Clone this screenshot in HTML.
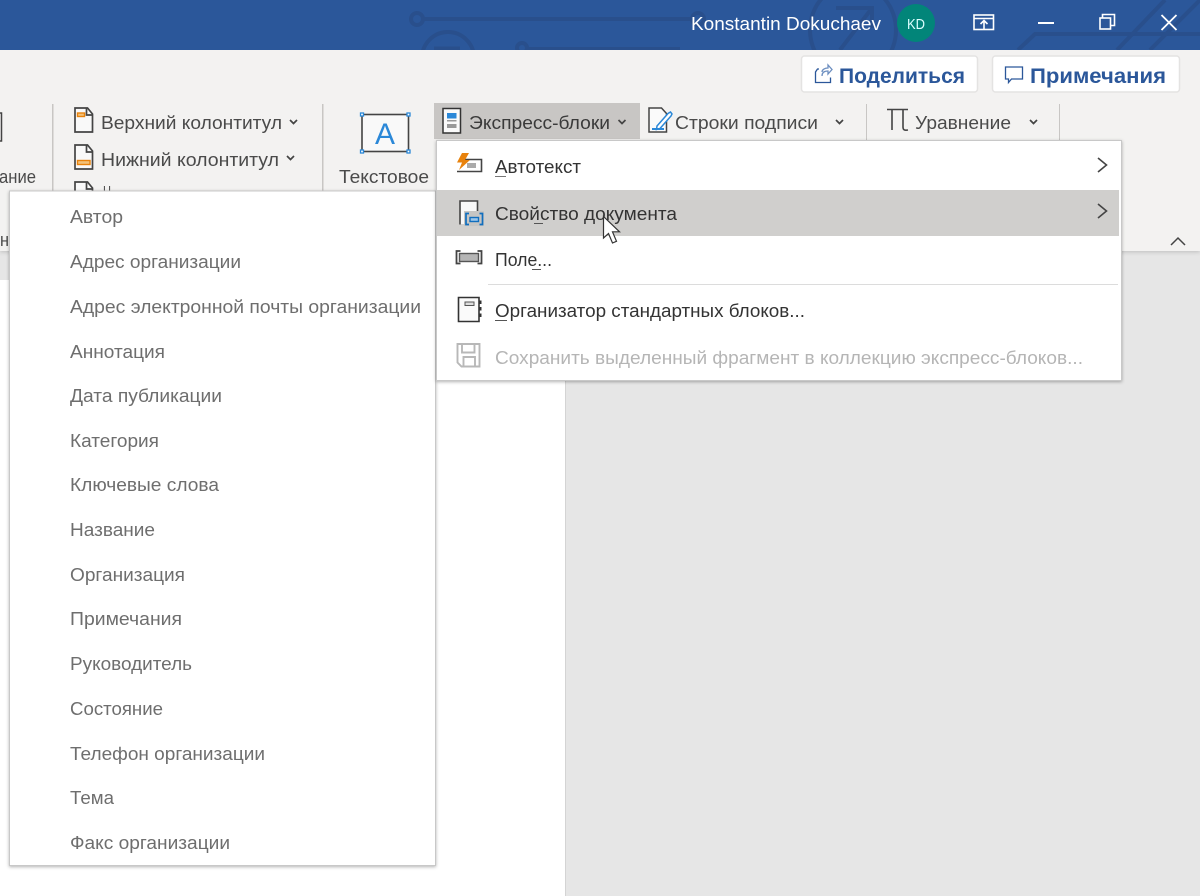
<!DOCTYPE html>
<html><head><meta charset="utf-8">
<style>
html,body{margin:0;padding:0;background:#fff;width:1200px;height:896px;overflow:hidden}
svg{display:block}
text{font-family:"Liberation Sans","DejaVu Sans",sans-serif;font-size:18px;fill:#4a4a4a}
.m text{fill:#6e6e6e}
</style></head><body>
<svg width="1200" height="896" viewBox="0 0 1200 896" xmlns="http://www.w3.org/2000/svg">
<defs>
<filter id="s" x="-5%" y="-5%" width="110%" height="110%"><feDropShadow dx="0" dy="1" stdDeviation="1.5" flood-color="#000" flood-opacity=".3"/></filter>
<filter id="s2" x="-5%" y="-50%" width="110%" height="200%"><feDropShadow dx="0" dy="1" stdDeviation="2" flood-color="#000" flood-opacity=".18"/></filter>
<clipPath id="tb"><rect width="1200" height="50"/></clipPath>
</defs>
<!-- backgrounds -->
<rect width="1200" height="896" fill="#e6e6e6"/>
<rect x="0" y="280" width="565" height="616" fill="#fff"/>
<rect x="565" y="280" width="1" height="616" fill="#d4d4d4"/>
<rect x="0" y="50" width="1200" height="201" fill="#f3f2f1" filter="url(#s2)"/>
<!-- title bar -->
<rect width="1200" height="50" fill="#2b579a"/>
<g clip-path="url(#tb)" fill="none" stroke="#294f8c" stroke-width="4">
<circle cx="417" cy="19" r="6"/><path d="M423 19H692"/><circle cx="698" cy="19" r="6"/>
<circle cx="448" cy="58" r="26"/><path d="M434 50h26" stroke-width="7"/>
<circle cx="522" cy="48" r="5"/><path d="M527 49H680"/>
<ellipse cx="853" cy="30" rx="43" ry="46"/>
<path d="M836 8h36v20M872 8L840 50"/>
<path d="M1018 50l17-16H1200"/><path d="M1117 50L1165 0M1150 50L1200 0"/>
</g>
<text x="691" y="30" textLength="190" lengthAdjust="spacingAndGlyphs" style="fill:#fff">Konstantin Dokuchaev</text>
<ellipse cx="916" cy="23" rx="19" ry="19" fill="#028579"/>
<text x="907" y="29" textLength="18" lengthAdjust="spacingAndGlyphs" style="fill:#dff;font-size:15px">KD</text>
<g fill="none" stroke="#fff" stroke-width="1.6">
<rect x="974" y="15" width="19.500" height="14.500"/><path d="M974 18.500h19.500"/>
<path d="M984 29.500v-8M980.500 24l3.500-3.500 3.500 3.500"/>
<path d="M1038 23h16" stroke-width="2"/>
<rect x="1100" y="18" width="10.500" height="11"/><path d="M1102.500 18v-3.500h12v11h-4"/>
<path d="M1161.500 15l15 15M1176.500 15l-15 15" stroke-width="1.800"/>
</g>
<!-- share / comments -->
<rect x="801.500" y="56" width="176" height="36" rx="3" fill="#fff" stroke="#e4e3e2" stroke-width="1.500"/>
<rect x="992.500" y="56" width="187" height="36" rx="3" fill="#fff" stroke="#e4e3e2" stroke-width="1.500"/>
<g fill="none" stroke="#2b579a" stroke-width="1.300">
<path d="M819 69l-1.500 0-2 3v10.500h15v-5"/><path d="M822 76c0-4 3-5 6-5v3l4-4.500-4-4.500v3c-3 0-6 1.500-6 4" stroke="#6d8fc0"/>
<path d="M1005.500 67h17v12h-11l-3 3.500v-3.500h-3z"/>
</g>
<text x="839" y="83" textLength="126" lengthAdjust="spacingAndGlyphs" style="fill:#2b579a;font-weight:700;font-size:21px">Поделиться</text>
<text x="1030" y="83" textLength="136" lengthAdjust="spacingAndGlyphs" style="fill:#2b579a;font-weight:700;font-size:21px">Примечания</text>
<!-- ribbon separators -->
<g fill="#c8c6c4">
<rect x="52" y="104" width="1.500" height="90"/>
<rect x="322" y="104" width="1.500" height="90"/>
<rect x="866" y="104" width="1" height="36"/>
<rect x="1059" y="104" width="1" height="36"/>
</g>
<!-- left partial -->
<path d="M-2 113H1.500V141H-2" fill="none" stroke="#444" stroke-width="1.500"/>
<text x="-1" y="183" textLength="37" lengthAdjust="spacingAndGlyphs">ание</text>
<text x="0" y="246" textLength="9" lengthAdjust="spacingAndGlyphs">н</text>
<!-- header/footer icons -->
<g stroke="#444" stroke-width="1.700" fill="#f9f9f9">
<path d="M75 108h12.500l5 6v18H75z"/><path d="M86.500 108v7h6" fill="none"/>
<path d="M75 145h12.500l5 6v18H75z"/><path d="M86.500 145v7h6" fill="none"/>
<path d="M75 182h12.500l5 6v6H75z"/><path d="M86.500 182v7h6" fill="none"/>
</g>
<rect x="77.500" y="113" width="7" height="3.500" fill="#f3c27a" stroke="#e8820c" stroke-width="1.400"/>
<rect x="77.500" y="160.500" width="12.500" height="4" fill="#f3c27a" stroke="#e8820c" stroke-width="1.400"/>
<text x="101" y="129" textLength="181" lengthAdjust="spacingAndGlyphs">Верхний колонтитул</text>
<text x="101" y="166" textLength="178" lengthAdjust="spacingAndGlyphs">Нижний колонтитул</text>
<text x="103" y="199" textLength="8" lengthAdjust="spacingAndGlyphs">Н</text>
<!-- text box -->
<rect x="362" y="114.500" width="46.500" height="37" fill="#f9f9f9" stroke="#444" stroke-width="1.600"/>
<g fill="#fff" stroke="#2b88d8" stroke-width="1.300">
<rect x="360.500" y="113" width="3" height="3"/><rect x="407" y="113" width="3" height="3"/>
<rect x="360.500" y="150" width="3" height="3"/><rect x="407" y="150" width="3" height="3"/>
</g>
<text x="375" y="144" textLength="20" lengthAdjust="spacingAndGlyphs" style="fill:#2b88d8;font-size:30px">A</text>
<text x="339" y="183" textLength="90" lengthAdjust="spacingAndGlyphs">Текстовое</text>
<!-- Express blocks button -->
<rect x="434" y="103" width="206" height="36" fill="#c8c6c4"/>
<rect x="443" y="108.500" width="17.500" height="24.500" fill="#fafafa" stroke="#333" stroke-width="1.500"/>
<rect x="447" y="113" width="9.500" height="5.500" fill="#2b88d8"/>
<rect x="447" y="120" width="9.500" height="1.500" fill="#999"/>
<rect x="447" y="124" width="9.500" height="4" fill="#999"/>
<text x="469" y="129" textLength="141" lengthAdjust="spacingAndGlyphs" style="fill:#3a3a3a">Экспресс-блоки</text>
<!-- signature -->
<path d="M649 108h12.500l5 5.500V132H649z" fill="#fafafa" stroke="#444" stroke-width="1.500"/>
<path d="M657 126l11-12.500 2.500-1.500 1.500 2-1 2-11 12.500-3.500 1z" fill="#fff" stroke="#2b88d8" stroke-width="1.500"/>
<path d="M652 129h12" stroke="#2b88d8" stroke-width="2"/>
<text x="675" y="129" textLength="143" lengthAdjust="spacingAndGlyphs">Строки подписи</text>
<!-- equation -->
<path d="M887 109.500h21M892 110v20M903 110v17c0 3 1.500 3.500 5 3" fill="none" stroke="#444" stroke-width="1.600"/>
<text x="915" y="129" textLength="96" lengthAdjust="spacingAndGlyphs">Уравнение</text>
<!-- chevrons -->
<g fill="none" stroke="#444" stroke-width="1.700">
<path d="M290 120l3.500 3.500 3.500-3.500"/><path d="M287 156l3.500 3.500 3.500-3.500"/>
<path d="M618.500 120l3.500 3.500 3.500-3.500"/><path d="M836 120l3.500 3.500 3.500-3.500"/><path d="M1030 120l3.500 3.500 3.500-3.500"/>
</g>
<!-- collapse -->
<path d="M1171 245l7-7 7 7" fill="none" stroke="#444" stroke-width="1.500"/>

<!-- left submenu -->
<rect x="9.500" y="191" width="426" height="674.500" fill="#fff" stroke="#c8c8c8" filter="url(#s)"/>
<g class="m">
<text x="70" y="223" textLength="53" lengthAdjust="spacingAndGlyphs">Автор</text>
<text x="70" y="268" textLength="171" lengthAdjust="spacingAndGlyphs">Адрес организации</text>
<text x="70" y="313" textLength="351" lengthAdjust="spacingAndGlyphs">Адрес электронной почты организации</text>
<text x="70" y="358" textLength="95" lengthAdjust="spacingAndGlyphs">Аннотация</text>
<text x="70" y="402" textLength="152" lengthAdjust="spacingAndGlyphs">Дата публикации</text>
<text x="70" y="447" textLength="89" lengthAdjust="spacingAndGlyphs">Категория</text>
<text x="70" y="491" textLength="149" lengthAdjust="spacingAndGlyphs">Ключевые слова</text>
<text x="70" y="536" textLength="85" lengthAdjust="spacingAndGlyphs">Название</text>
<text x="70" y="581" textLength="115" lengthAdjust="spacingAndGlyphs">Организация</text>
<text x="70" y="625" textLength="112" lengthAdjust="spacingAndGlyphs">Примечания</text>
<text x="70" y="670" textLength="122" lengthAdjust="spacingAndGlyphs">Руководитель</text>
<text x="70" y="715" textLength="93" lengthAdjust="spacingAndGlyphs">Состояние</text>
<text x="70" y="760" textLength="195" lengthAdjust="spacingAndGlyphs">Телефон организации</text>
<text x="70" y="804" textLength="44" lengthAdjust="spacingAndGlyphs">Тема</text>
<text x="70" y="849" textLength="160" lengthAdjust="spacingAndGlyphs">Факс организации</text>
</g>

<!-- right menu -->
<rect x="436.500" y="140.500" width="685" height="240" fill="#fff" stroke="#c8c8c8" filter="url(#s)"/>
<rect x="437" y="190" width="682" height="46" fill="#d0cfcd"/>
<rect x="488" y="284" width="630" height="1" fill="#dcdcdc"/>
<!-- autotext icon -->
<path d="M465 159.500H481.500V171.500H457" fill="none" stroke="#444" stroke-width="1.600"/>
<rect x="467" y="163" width="9" height="5" fill="#aaa"/>
<path d="M462 153h7l-4 7h5l-11 10 3-7.500h-5z" fill="#e8820c"/>
<!-- doc prop icon -->
<rect x="460" y="201" width="17.500" height="23" fill="#f8f8f8"/>
<path d="M460 224.500V201h17.500v11" fill="none" stroke="#444" stroke-width="1.600"/>
<rect x="464" y="211" width="20" height="15" fill="#c6c5c3"/>
<path d="M469 213.500h-3v11h3M479.500 213.500h3v11h-3" fill="none" stroke="#106ebe" stroke-width="1.700"/>
<rect x="470" y="217.500" width="8.500" height="4" fill="#9cc6ea" stroke="#106ebe" stroke-width="1.400"/>
<!-- field icon -->
<path d="M460.500 251h-4v12.500h4M477.500 251h4v12.500h-4" fill="none" stroke="#444" stroke-width="1.800"/>
<rect x="459.500" y="253.500" width="19" height="8" fill="#b5b5b5" stroke="#555" stroke-width="1.400"/>
<!-- organizer icon -->
<path d="M458.500 297.500h20.500v24h-20.500z" fill="#fafafa" stroke="#333" stroke-width="1.600"/>
<rect x="465" y="302" width="9" height="3.500" fill="#ddd" stroke="#555"/>
<rect x="478.500" y="300.500" width="3" height="3.500" fill="#333"/><rect x="478.500" y="307" width="3" height="3.500" fill="#333"/><rect x="478.500" y="313.500" width="3" height="3.500" fill="#333"/>
<!-- save icon -->
<path d="M457.500 344h22v22.500h-18l-4-4z" fill="#fff" stroke="#b8b8b8" stroke-width="1.900"/>
<path d="M462 344v8.500h12.500V344M463.500 366.500V357h11.500v9.500" fill="none" stroke="#b8b8b8" stroke-width="1.900"/>

<text x="495" y="173" textLength="86" lengthAdjust="spacingAndGlyphs" style="fill:#333">Автотекст</text>
<rect x="495" y="176" width="11" height="1" fill="#777"/>
<text x="495" y="220" textLength="182" lengthAdjust="spacingAndGlyphs" style="fill:#333">Свойство документа</text>
<rect x="534" y="223" width="9" height="1" fill="#555"/>
<text x="495" y="266" textLength="57" lengthAdjust="spacingAndGlyphs" style="fill:#333">Поле...</text>
<rect x="532" y="269" width="9" height="1" fill="#555"/>
<text x="495" y="317" textLength="310" lengthAdjust="spacingAndGlyphs" style="fill:#333">Организатор стандартных блоков...</text>
<rect x="495" y="320" width="12" height="1" fill="#555"/>
<text x="495" y="364" textLength="588" lengthAdjust="spacingAndGlyphs" style="fill:#b5b5b5">Сохранить выделенный фрагмент в коллекцию экспресс-блоков...</text>
<path d="M1098 158l8.500 7-8.500 7M1098 204l8.500 7-8.500 7" fill="none" stroke="#444" stroke-width="1.600"/>
<!-- cursor -->
<path d="M603.500 216.500V238l5-4.500 4 9.500 4-1.700-4-9.500h7z" fill="#fff" stroke="#333" stroke-width="1.200"/>
</svg>
</body></html>
